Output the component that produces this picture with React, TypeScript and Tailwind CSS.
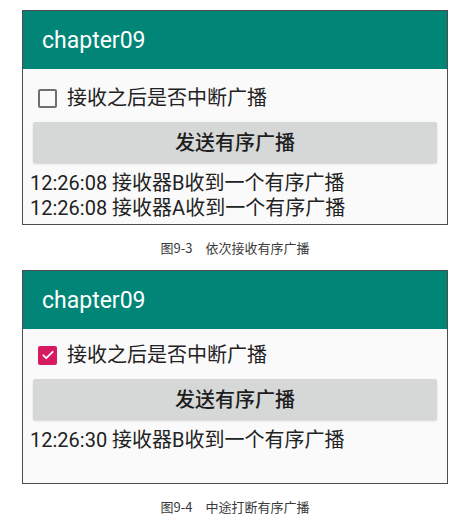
import React from "react";

const FONT = { fontFamily: "Roboto, 'Noto Sans CJK SC', sans-serif" };
const CAP = { fontFamily: "'Noto Sans CJK SC', 'Noto Sans', sans-serif" };

function Checkbox({ checked }: { checked: boolean }) {
  if (checked) {
    return (
      <div className="w-[19px] h-[19px] rounded-[2px] bg-[#d81b60] flex items-center justify-center">
        <svg width="14" height="14" viewBox="0 0 24 24" fill="none">
          <path d="M4 12.5l5 5L20 6.5" stroke="white" strokeWidth="3" strokeLinecap="round" strokeLinejoin="round" />
        </svg>
      </div>
    );
  }
  return <div className="w-[19px] h-[19px] rounded-[2px] border-2 border-[#6f6f6f]" />;
}

function Phone({
  checked,
  lines,
  height,
  rowTop,
}: {
  checked: boolean;
  lines: string[];
  height: string;
  rowTop: string;
}) {
  return (
    <div className={`w-[426px] ${height} border border-[#4d4d4d] bg-[#fafafa] flex flex-col overflow-hidden`} style={FONT}>
      <div className="h-[58px] bg-[#008577] flex items-center pl-[19px] shrink-0">
        <span className="text-white text-[23px] font-normal leading-none">chapter09</span>
      </div>
      <div className={`${rowTop} h-[30px] flex items-center pl-[15px] gap-[10px]`}>
        <Checkbox checked={checked} />
        <span className="text-[20px] text-[#222] leading-none">接收之后是否中断广播</span>
      </div>
      <div className="mt-[9px] mx-[10px] h-[41px] bg-[#d6d7d7] rounded-[2px] shadow-[0_1px_2px_rgba(0,0,0,0.15)] flex items-center justify-center">
        <span className="text-[20px] font-medium text-[#1d1d1d] leading-none">发送有序广播</span>
      </div>
      <div className="mt-[8px] pl-[7px] flex flex-col">
        {lines.map((l, i) => (
          <div key={i} className="text-[20px] leading-[25px] text-[#222] whitespace-nowrap">
            {l}
          </div>
        ))}
      </div>
    </div>
  );
}

function Caption({ num, text }: { num: string; text: string }) {
  return (
    <div className="w-[426px] h-[45px] flex items-center justify-center text-[13px] text-[#3a3a3a]" style={CAP}>
      <span>{num}</span>
      <span className="ml-[13px]">{text}</span>
    </div>
  );
}

export default function App() {
  return (
    <div className="w-[476px] h-[522px] bg-white overflow-hidden pt-[10px] pl-[22px]">
      <Phone
        checked={false}
        height="h-[215px]"
        rowTop="mt-[14px]"
        lines={["12:26:08 接收器B收到一个有序广播", "12:26:08 接收器A收到一个有序广播"]}
      />
      <Caption num="图9-3" text="依次接收有序广播" />
      <Phone checked={true} height="h-[214px]" rowTop="mt-[11px]" lines={["12:26:30 接收器B收到一个有序广播"]} />
      <Caption num="图9-4" text="中途打断有序广播" />
    </div>
  );
}
